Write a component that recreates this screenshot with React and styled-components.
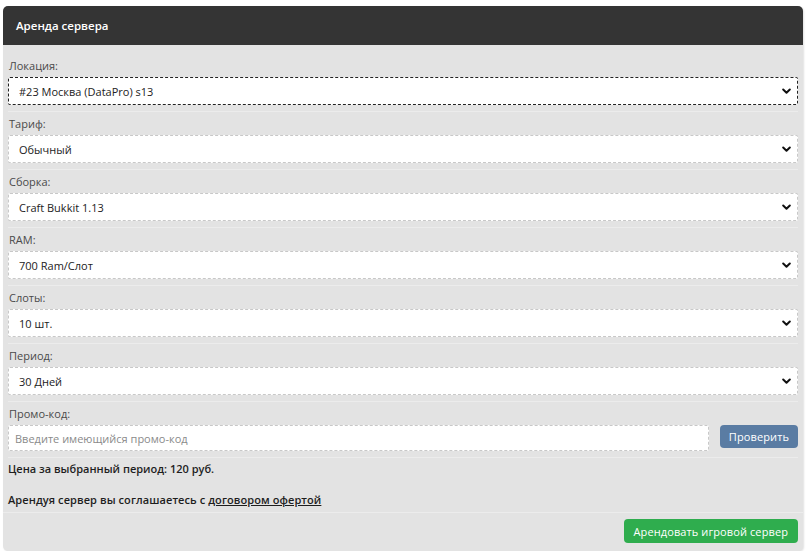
import React from "react";
import styled, { createGlobalStyle } from "styled-components";

const Global = createGlobalStyle`
  html, body { margin: 0; padding: 0; background: #ffffff; }
  body { font-family: "Open Sans", "Noto Sans", sans-serif; }
  * { box-sizing: border-box; }
`;

const Card = styled.div`
  margin: 6px 0 0 3px;
  width: 800px;
  border-radius: 5px;
  background: #e3e3e3;
  box-shadow: 1px 1px 2px rgba(0,0,0,0.12);
  overflow: hidden;
`;

const Header = styled.div`
  height: 39px;
  background: #343434;
  color: #ffffff;
  font-size: 11.5px;
  font-weight: 600;
  display: flex;
  align-items: center;
  padding-left: 13px;
`;

const Body = styled.div`
  padding: 9px 5px 0 5px;
`;

const Group = styled.div`
  padding: 4px 0 6px 0;
  border-top: ${(p) => (p.$first ? "none" : "1px solid #ececec")};
  display: flex;
  flex-direction: column;
`;

const Label = styled.div`
  font-size: 11px;
  line-height: 16px;
  color: #4a4a4a;
  padding-left: 1px;
  margin-bottom: 3px;
`;

const SelectWrap = styled.div`
  position: relative;
  height: 28px;
`;

const Select = styled.select`
  appearance: none;
  -webkit-appearance: none;
  width: 100%;
  height: 100%;
  background: #ffffff;
  border: 1px dashed ${(p) => (p.$active ? "#222" : "#c8c8c8")};
  border-radius: 2px;
  font-family: "Open Sans", "Noto Sans", sans-serif;
  font-size: 11px;
  color: #222;
  padding: 0 0 0 10px;
  outline: none;
`;

const Chevron = styled.svg`
  position: absolute;
  right: 7px;
  top: 11px;
  width: 9px;
  height: 7px;
  pointer-events: none;
`;

const PromoRow = styled.div`
  display: flex;
  gap: 11px;
  align-items: flex-start;
`;

const Input = styled.input`
  flex: 1;
  height: 26px;
  background: #fff;
  border: 1px dashed #c8c8c8;
  border-radius: 2px;
  font-family: "Open Sans", "Noto Sans", sans-serif;
  font-size: 11px;
  padding: 0 0 0 6px;
  outline: none;
  &::placeholder { color: #8a8a8a; }
`;

const Button = styled.button`
  border: none;
  border-radius: 4px;
  color: #fff;
  font-family: "Open Sans", "Noto Sans", sans-serif;
  font-size: 11px;
  font-weight: 500;
  letter-spacing: 0.1px;
  height: ${(p) => p.$h}px;
  padding: 0 ${(p) => p.$px}px;
  background: ${(p) => p.$bg};
  cursor: pointer;
`;

const Info = styled.div`
  border-top: 1px solid #ececec;
  padding: 3px 0 4px 0;
  display: flex;
  flex-direction: column;
  gap: 15px;
`;

const Strong = styled.div`
  font-size: 11px;
  font-weight: 600;
  line-height: 16px;
  color: #1e1e1e;
  letter-spacing: ${(p) => p.$ls || 0}px;
`;

const Link = styled.a`
  color: #1e1e1e;
  text-decoration: underline;
`;

const Footer = styled.div`
  border-top: 1px solid #ececec;
  margin: 0 -5px;
  padding: 6px 5px 8px 5px;
  display: flex;
  justify-content: flex-end;
`;

const fields = [
  { label: "Локация:", value: "#23 Москва (DataPro) s13", active: true },
  { label: "Тариф:", value: "Обычный" },
  { label: "Сборка:", value: "Craft Bukkit 1.13" },
  { label: "RAM:", value: "700 Ram/Слот" },
  { label: "Слоты:", value: "10 шт." },
  { label: "Период:", value: "30 Дней" },
];

function Field({ label, value, active, first }) {
  return (
    <Group $first={first}>
      <Label>{label}</Label>
      <SelectWrap>
        <Select $active={active} defaultValue={value}>
          <option>{value}</option>
        </Select>
        <Chevron viewBox="0 0 9 7">
          <path d="M1.2 1.5 L4.5 4.8 L7.8 1.5" fill="none" stroke="#111" strokeWidth="2" strokeLinecap="round" strokeLinejoin="round" />
        </Chevron>
      </SelectWrap>
    </Group>
  );
}

export default function App() {
  return (
    <>
      <Global />
      <Card>
        <Header>Аренда сервера</Header>
        <Body>
          {fields.map((f, i) => (
            <Field key={f.label} {...f} first={i === 0} />
          ))}
          <Group>
            <Label>Промо-код:</Label>
            <PromoRow>
              <Input placeholder="Введите имеющийся промо-код" />
              <Button $bg="#5a7ca3" $h={23} $px={9}>Проверить</Button>
            </PromoRow>
          </Group>
          <Info>
            <Strong>Цена за выбранный период: 120 руб.</Strong>
            <Strong $ls={0.08}>
              Арендуя сервер вы соглашаетесь с <Link href="#">договором офертой</Link>
            </Strong>
          </Info>
          <Footer>
            <Button $bg="#2fad4e" $h={24} $px={10}>Арендовать игровой сервер</Button>
          </Footer>
        </Body>
      </Card>
    </>
  );
}
